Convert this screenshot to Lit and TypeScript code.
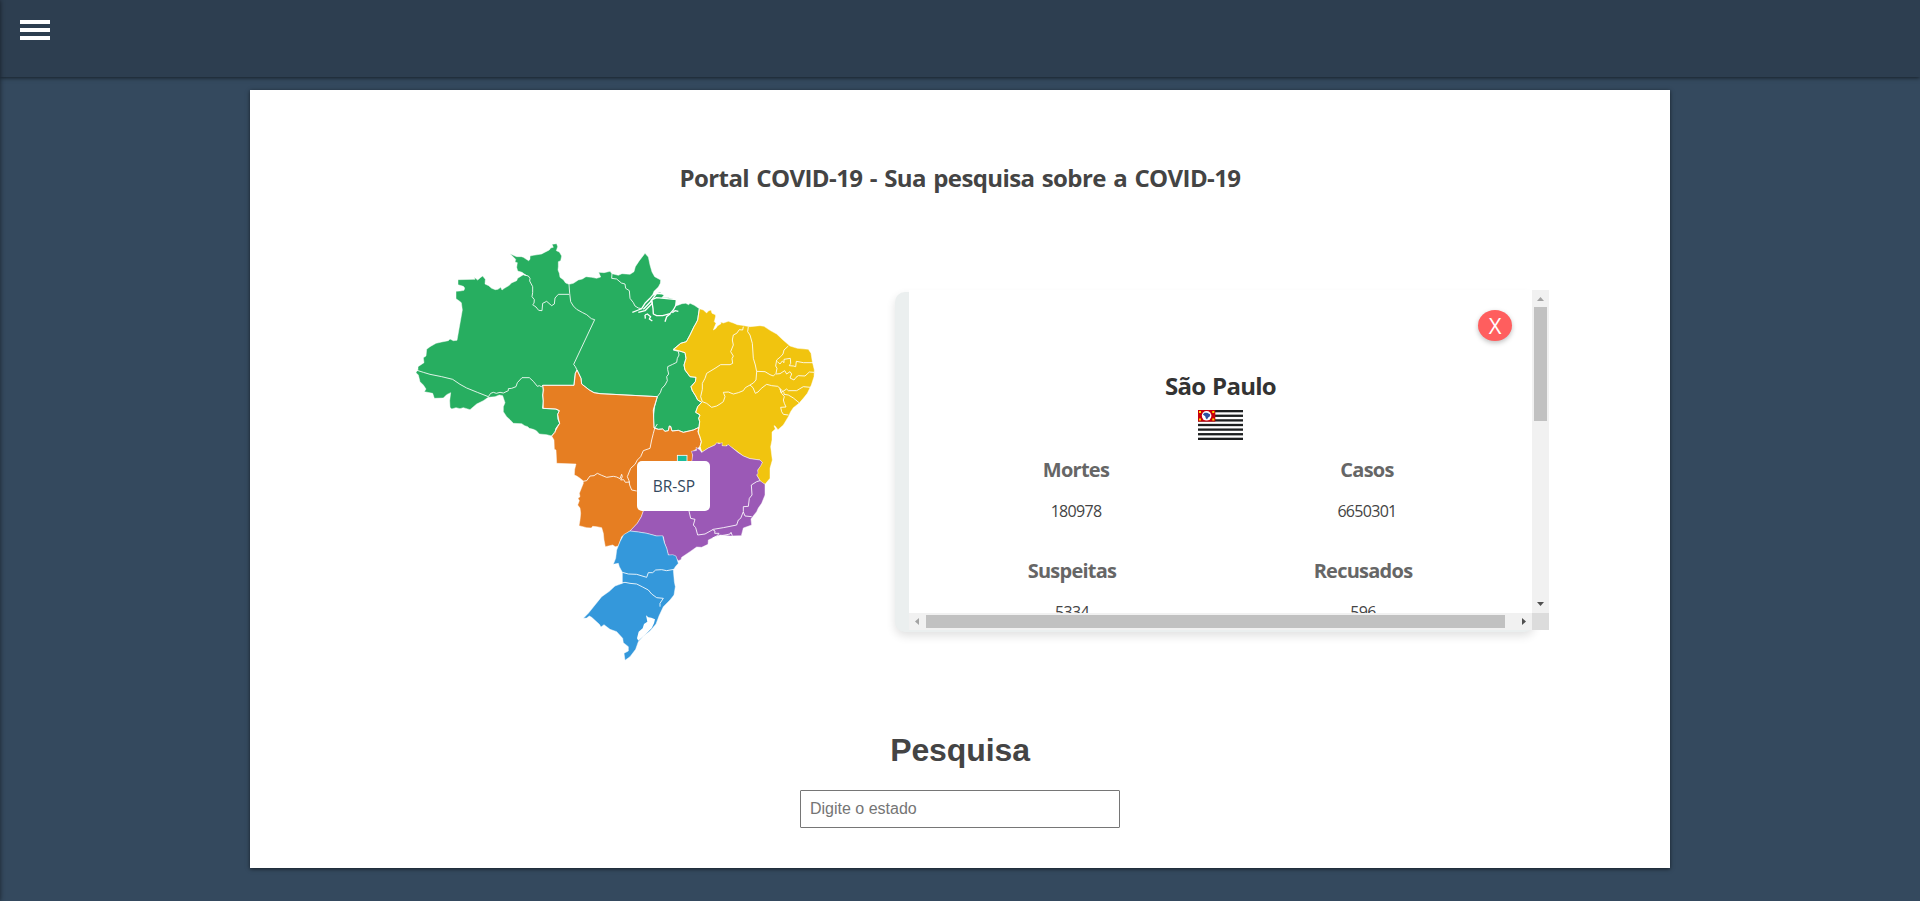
import { LitElement, html, css, svg } from "lit";
import { customElement } from "lit/decorators.js";

interface Stat { label: string; value: string; side: string }

const REGIONS: { cls: string; d: string }[] = [
  {
    cls: "norte",
    d: "M54 418L54 410 72 398 70 383 78 378 80 358 90 350 108 340 125 336 145 332 150 327 160 332 171 331 187 240 184 218 178 213 168 206 168 184 180 183 192 181 194 174 190 169 174 164 174 149 225 148 223 142 233 150 241 143 248 138 256 148 255 162 266 167 275 175 286 179 294 178 302 172 306 180 313 175 328 166 334 159 350 152 353 145 370 134 378 136 366 127 353 123 350 112 352 98 345 96 347 88 330 71 340 76 350 80 364 80 370 82 379 88 386 92 390 88 390 78 400 76 425 72 432 68 448 60 452 54 460 52 456 43 470 41 473 50 469 62 478 66 485 78 482 92 475 95 475 110 474 120 478 130 480 142 490 149 497 159 507 163 520 160 535 150 547 147 558 140 575 142 590 145 602 141 596 127 612 128 630 124 636 131 655 136 666 131 690 133 702 125 706 110 718 92 735 70 745 81 750 105 756 126 764 140 782 150 781 160 775 171 762 184 759 192 780 187 792 196 785 203 806 203 830 210 826 228 836 225 846 221 857 220 866 224 870 220 883 226 898 236 893 270 887 282 882 290 870 315 859 335 842 340 820 358 835 362 855 368 858 385 852 405 855 420 870 440 888 442 886 455 873 470 877 482 887 498 893 510 905 517 893 530 887 547 900 555 896 565 899 575 897 592 880 600 850 607 835 601 816 603 812 588 808 588 805 602 795 604 788 597 775 598 762 592 760 570 764 530 772 500 660 494 600 491 582 488 568 480 555 470 545 462 543 445 536 430 531 420 526 430 523 450 522 466 428 466 431 480 428 495 430 513 428 535 466 537 478 542 473 553 474 567 479 580 468 595 465 607 455 618 440 614 418 612 409 602 400 598 388 595 383 590 374 587 365 581 340 580 330 569 320 560 310 545 310 530 315 518 308 497 298 495 285 500 265 502 250 512 230 522 210 539 190 533 180 536 168 533 155 537 150 532 149 512 152 488 140 494 130 504 103 505 98 490 73 485 78 477 70 465 60 455 55 435 48 428Z",
  },
  {
    cls: "centro",
    d: "M428 466L522 466 526 430 531 420 543 445 545 462 568 480 582 488 600 491 772 500 760 540 762 594 775 598 788 597 795 604 805 602 808 588 812 590 816 603 835 601 850 607 880 600 897 592 894 605 900 620 904 635 900 650 877 665 880 700 780 800 730 843 724 860 712 880 690 903 665 920 655 948 646 950 638 945 616 950 612 930 610 910 605 893 590 890 578 889 574 894 560 893 537 887 540 870 542 850 540 834 533 825 538 812 534 805 540 800 538 790 544 775 550 760 549 752 539 744 530 738 523 735 524 718 528 702 470 700 468 660 463 658 462 630 455 618 468 600 479 580 473 553 478 542 470 537 430 535Z",
  },
  {
    cls: "nordeste",
    d: "M898 236L910 240 920 249 925 243 933 240 936 250 946 254 947 258 943 275 948 280 943 292 940 300 948 295 952 288 963 281 962 276 970 279 985 274 1000 279 1012 284 1025 286 1050 290 1080 287 1092 289 1110 301 1130 312 1150 331 1170 348 1192 355 1225 358 1233 370 1237 395 1243 420 1242 440 1234 465 1222 490 1210 505 1197 520 1180 533 1172 545 1165 560 1150 585 1134 599 1125 588 1122 587 1126 597 1116 606 1116 630 1112 650 1117 690 1110 715 1110 745 1095 763 1086 758 1080 752 1070 735 1073 720 1087 697 1080 690 1050 686 1030 678 995 652 980 646 975 655 957 638 945 645 925 654 905 667 900 650 904 635 895 610 899 575 896 565 900 555 887 547 893 530 905 517 893 510 887 498 877 482 873 470 886 455 888 442 870 440 855 420 852 405 858 385 855 368 835 362 820 360 842 340 859 335 870 315 882 290 893 270Z",
  },
  {
    cls: "sudeste",
    d: "M876 692L878 675 874 664 890 661 888 652 900 660 905 667 925 654 945 645 950 638 957 641 967 638 966 647 980 648 984 643 995 652 1015 668 1030 678 1050 686 1080 690 1087 697 1082 708 1073 720 1074 730 1070 735 1080 752 1095 763 1095 795 1085 820 1075 834 1070 845 1058 860 1053 867 1055 885 1030 894 1024 917 990 918 960 915 938 924 925 930 924 943 905 952 890 951 870 965 845 982 843 989 835 992 825 980 805 975 800 955 794 940 790 920 770 918 740 910 715 906 690 903 712 880 724 860 730 843 780 780Z",
  },
  {
    cls: "sul",
    d: "M690 903L715 906 740 910 770 918 788 917 793 938 800 955 805 975 818 974 828 978 832 990 835 1000 826 1010 820 1020 823 1055 826 1070 822 1095 810 1110 790 1130 777 1158 768 1182 750 1203 730 1218 715 1235 707 1258 690 1280 675 1291 672 1270 685 1263 685 1250 670 1238 668 1225 650 1205 630 1198 612 1184 603 1191 598 1183 575 1162 568 1158 560 1164 550 1165 565 1150 605 1100 628 1084 645 1068 667 1060 667 1027 658 1010 655 1000 640 1003 647 985 650 960 660 935 671 914Z",
  },
];

const BORDERS = [
  "48 420 70 427 90 433 125 440 158 448 180 463 200 474 232 487 265 500",
  "265 500 272 490 280 487 289 490 300 487 310 489 325 482 325 476 335 475 348 470 352 458 366 443 388 443 400 454 412 469 418 467 424 470 428 466",
  "370 134 385 138 390 145 389 153 398 170 398 188 396 200 403 209 402 220 398 224 408 231 416 241 426 242 428 220 440 214 455 227 463 222 465 204 475 193 507 193",
  "507 163 509 190 512 215 520 228 530 238 548 248 560 254 574 266 584 269 521 403 526 410 531 420",
  "636 130 635 145 650 147 664 159 675 162 677 175 688 182 690 205 700 218 705 228 715 234 725 236",
  "820 360 835 364 837 375 832 385 830 397 818 403 803 410 803 419 806 432 800 440 802 452 795 465 785 476 781 488 772 500",
  "549 754 560 752 570 738 582 737 592 730 605 736 620 742 640 739 650 741 660 746 665 733 667 740 662 750 671 749 676 757 690 756",
  "772 582 764 595 760 610 755 630 750 655 730 662 722 680 712 690 705 703 692 715 682 740 687 752 689 765 695 780 710 783",
  "1030 290 1028 300 1018 299 1010 310 1000 315 997 330 1000 345 992 365 1000 378 996 386 998 400 990 404 962 404 945 415 920 430 915 445 907 460 907 478 902 500 907 515 920 520 935 532 950 528 960 522 970 515 975 500 970 487 985 486 1000 492 1015 488 1030 482 1036 473 1050 465 1060 459 1068 450 1070 425 1066 405 1060 385 1057 340 1050 315 1043 305 1045 290",
  "1070 424 1095 425 1110 434 1120 438 1128 430 1131 415 1127 408 1130 390 1142 380 1149 372 1152 360 1165 348",
  "1132 395 1140 402 1147 393 1152 398 1152 388 1171 385 1172 400 1168 407 1180 408 1187 410 1189 394 1210 398 1240 398",
  "1128 432 1140 431 1154 422 1160 432 1170 425 1175 432 1170 444 1182 450 1188 442 1195 437 1215 438 1228 426 1242 427",
  "1050 465 1059 473 1066 490 1074 486 1084 475 1100 463 1115 467 1133 469 1140 475 1143 488 1160 477 1165 482 1190 482 1210 470 1232 472",
  "1140 475 1152 488 1152 493 1165 495 1180 504 1197 518",
  "1140 478 1145 490 1153 500 1150 510 1153 520 1158 531 1142 532 1145 545 1150 553 1165 555",
  "867 843 872 865 885 868 880 885 887 893 893 915 915 912 940 898 970 893 1010 885 1015 870 1022 865 1030 845 1030 830 1045 829 1048 805 1056 795 1054 765 1070 755 1080 752",
  "1030 846 1035 858 1055 860",
  "938 899 945 903 944 910 957 910 952 917 938 924 960 920 970 916 990 912 993 907 997 917",
  "667 1027 685 1032 710 1033 740 1042 745 1028 758 1028 767 1020 785 1019 800 1022 822 1018",
  "660 1060 675 1057 690 1060 710 1062 728 1071 745 1080 755 1092 770 1103 790 1105 780 1120 780 1130",
];

const RIVERS = [
  "697 247 715 240 725 236 735 220 750 205 760 193 782 172 776 184 760 196",
  "715 247 735 242 757 220 754 210 770 203 830 209",
  "755 210 759 235 760 252 770 257 788 257 810 251 820 240 828 225 829 210",
  "735 255 742 252 752 260 748 267 757 273",
  "735 255 736 266",
  "795 275 800 260 811 251",
  "730 238 751 216 770 190 795 192",
  "817 248 825 242 835 244",
];

const STATS: Stat[] = [
  { label: "Mortes", value: "180978", side: "a" },
  { label: "Casos", value: "6650301", side: "b" },
  { label: "Suspeitas", value: "5334", side: "c" },
  { label: "Recusados", value: "596", side: "d" },
];

@customElement("brazil-map")
class BrazilMap extends LitElement {
  static styles = css`
    :host { display: block; position: relative; width: 433px; height: 440px; }
    .map { display: block; width: 433px; height: 440px; }
    .region { stroke: #fff; stroke-width: 1.4; stroke-linejoin: round; }
    .norte { fill: #27ae60; }
    .centro { fill: #e67e22; }
    .nordeste { fill: #f1c40f; }
    .sudeste { fill: #9b59b6; }
    .sul { fill: #3498db; }
    .df { fill: #1abc9c; stroke: #fff; stroke-width: 2.4; }
    .border { fill: none; stroke: #fff; stroke-opacity: .85; stroke-width: 3; stroke-linejoin: round; }
    .seam { fill: none; stroke: #fff; stroke-opacity: .8; stroke-width: 3; }
    .river { fill: none; stroke: #fff; stroke-width: 4; stroke-linejoin: round; }
    .lagoon { fill: #fff; }
    .tip {
      position: absolute; left: 237px; top: 231px; width: 73px; height: 50px;
      box-sizing: border-box; border-radius: 5px; background: #fff; color: #34495e;
      font: 16px/50px "Open Sans", "Noto Sans", sans-serif; text-align: center;
    }
    .code { display: inline-block; transform: scaleX(.97); }
  `;
  render() {
    return html`
      <svg class="map" viewBox="0 0 1299 1320">
        ${REGIONS.map((r) => svg`<path class="region ${r.cls}" d=${r.d}></path>`)}
        <polyline class="seam" points="428 466 522 466 526 430 531 420 543 445 545 462 568 480 582 488 600 491 772 500 760 540 762 594 775 598 788 597 795 604 805 602 808 588 812 590 816 603 835 601 850 607 880 600 897 592"></polyline>
        <polyline class="seam" points="428 466 431 480 428 495 430 513 428 535 466 537 478 542 473 553 474 567 479 580 468 595 465 607 455 618"></polyline>
        <polyline class="seam" points="898 236 893 270 887 282 882 290 870 315 859 335 842 340 820 358 835 362 855 368 858 385 852 405 855 420 870 440 888 442 886 455 873 470 877 482 887 498 893 510 905 517 893 530 887 547 900 555 896 565 899 575 897 592 894 605 900 620 904 635 900 650 905 667"></polyline>
        ${BORDERS.map((p) => svg`<polyline class="border" points=${p}></polyline>`)}
        ${RIVERS.map((p) => svg`<polyline class="river" points=${p}></polyline>`)}
        <path class="lagoon" d="M738 1156L745 1162 754 1163 765 1168 762 1180 755 1195 735 1214 715 1232 711 1225 716 1205 728 1195 732 1182 742 1175Z"></path>
        <rect class="df" x="832" y="676" width="29" height="22"></rect>
      </svg>
      <div class="tip"><span class="code">BR-SP</span></div>
    `;
  }
}

@customElement("state-panel")
class StatePanel extends LitElement {
  static styles = css`
    :host { display: block; padding-top: 2px; width: 654px; height: 342px; box-sizing: border-box; font-family: "Open Sans", "Noto Sans", sans-serif; }
    .shell { width: 639px; height: 340px; border-radius: 10px; background: #ebefef; box-shadow: 0 4px 10px rgba(0,0,0,.12); padding-left: 14px; box-sizing: border-box; }
    .frame { position: relative; top: -2px; width: 640px; height: 340px; display: grid; grid-template: 323px 17px / 623px 17px; }
    .view { background: #fff; overflow: hidden; display: flex; flex-direction: column; align-items: center; padding: 20px; position: relative; box-sizing: border-box; }
    .close { align-self: flex-end; width: 34px; height: 33px; border-radius: 50%; background: #ff5e5e; color: #fff; text-align: center; font-size: 22px; font-weight: 500; line-height: 31px; box-shadow: 0 2px 5px rgba(0,0,0,.25); }
    .name { margin: 29px 0 0; font-size: 24px; line-height: 32px; font-weight: 700; color: #333; width: 111px; white-space: nowrap; letter-spacing: -.7px; word-spacing: 1px; }
    .flag { display: block; width: 45px; height: 30px; margin-top: 8px; flex: none; }
    .stats { display: grid; grid-template-columns: 291px 291px; margin: 16px -2px 0 0; }
    .stat { height: 101px; text-align: center; }
    .label { font-size: 20px; line-height: 28px; font-weight: 700; color: #666; margin: 0; letter-spacing: -.75px; }
    .value { font-size: 16px; line-height: 24px; margin: 15px 0 0; color: #444; letter-spacing: -.7px; }
    .c, .d { position: relative; left: -4px; }
    .bar { display: flex; background: #f1f1f1; align-items: center; }
    .vert { flex-direction: column; }
    .arrow { display: block; width: 17px; height: 17px; flex: none; }
    .dim { fill: #a3a3a3; }
    .dark { fill: #505050; }
    .thumb { background: #c1c1c1; }
    .vthumb { width: 13px; height: 114px; }
    .hthumb { height: 13px; width: 579px; }
    .grow { flex: 1; }
    .corner { background: #dcdcdc; }
  `;
  render() {
    const stripes = [0, 1, 2, 3, 4, 5, 6];
    return html`
      <div class="shell"><div class="frame">
        <div class="view">
          <div class="close">X</div>
          <h2 class="name">São Paulo</h2>
          <svg class="flag" viewBox="0 0 45 30">
            <rect width="45" height="30" fill="#fff"></rect>
            ${stripes.map((i) => svg`<rect y=${i * 4.615} width="45" height="2.31" fill="#1d1f20"></rect>`)}
            <rect width="17.3" height="11.6" fill="#c8000a"></rect>
            <circle cx="8.6" cy="5.8" r="4.8" fill="#fff"></circle>
            <path d="M4.8 4.4L6.6 2.7 9.2 2.8 12.3 4.6 11.7 6.6 10.2 7.6 9 9.5 7.8 8.2 7.2 6.2Z" fill="#3050a0"></path>
            <path d="M1 1h2v2h-2zM14.3 1h2v2h-2zM1 8.5h2v2h-2zM14.3 8.5h2v2h-2z" fill="#ffd900"></path>
          </svg>
          <div class="stats">
            ${STATS.map((s) => html`<div class="stat ${s.side}"><h3 class="label">${s.label}</h3><p class="value">${s.value}</p></div>`)}
          </div>
        </div>
        <div class="bar vert">
          <svg class="arrow" viewBox="0 0 17 17"><path class="dim" d="M5 11L8.5 7 12 11Z"></path></svg>
          <div class="thumb vthumb"></div><div class="grow"></div>
          <svg class="arrow" viewBox="0 0 17 17"><path class="dark" d="M5 6L8.5 10 12 6Z"></path></svg>
        </div>
        <div class="bar">
          <svg class="arrow" viewBox="0 0 17 17"><path class="dim" d="M10 5L6 8.5 10 12Z"></path></svg>
          <div class="thumb hthumb"></div><div class="grow"></div>
          <svg class="arrow" viewBox="0 0 17 17"><path class="dark" d="M7 5L11 8.5 7 12Z"></path></svg>
        </div>
        <div class="corner"></div>
      </div></div>
    `;
  }
}

@customElement("app-root")
class AppRoot extends LitElement {
  static styles = css`
    :host { display: block; position: relative; height: 901px; overflow: hidden; background: #34495e; font-family: "Open Sans", "Noto Sans", sans-serif; }
    .edge { position: absolute; left: -10px; top: 0; width: 10px; height: 901px; box-shadow: 0 0 5px rgba(0,0,0,.55); }
    .top { height: 77px; background: #2d3e50; box-shadow: 0 1px 4px rgba(0,0,0,.6); padding: 20px; box-sizing: border-box; }
    .burger { display: flex; flex-direction: column; gap: 4px; width: 30px; }
    .line { height: 4px; background: #fff; }
    .card { width: 1420px; height: 778px; margin: 13px auto 0; background: #fff; box-shadow: 0 1px 4px rgba(0,0,0,.6); box-sizing: border-box; display: flex; flex-direction: column; align-items: center; padding-top: 71px; }
    .title { margin: 0; font-size: 24px; line-height: 34px; font-weight: 700; color: #444; white-space: nowrap; letter-spacing: -.6px; word-spacing: 1.7px; }
    .row { display: flex; align-self: stretch; padding: 35px 0 0 150px; height: 475px; box-sizing: border-box; }
    .panel { margin: 60px 0 0 62px; }
    .search { margin: 62px 0 0; font: 700 32px/37px "Liberation Sans", Arial, sans-serif; color: #444; letter-spacing: -.1px; }
    .field { margin: 21px 0 0; width: 320px; height: 38px; box-sizing: border-box; border: 1px solid #767676; border-radius: 1px; padding: 1px 9px; font: 16px "Liberation Sans", Arial, sans-serif; background: #fff; outline: none; }
    .field::placeholder { color: #757575; }
  `;
  render() {
    return html`
      <header class="top"><div class="burger"><div class="line"></div><div class="line"></div><div class="line"></div></div></header>
      <main class="card">
        <h1 class="title">Portal COVID-19 - Sua pesquisa sobre a COVID-19</h1>
        <div class="row"><brazil-map></brazil-map><state-panel class="panel"></state-panel></div>
        <h2 class="search">Pesquisa</h2>
        <input class="field" type="text" placeholder="Digite o estado" />
      </main>
      <div class="edge"></div>
    `;
  }
}
